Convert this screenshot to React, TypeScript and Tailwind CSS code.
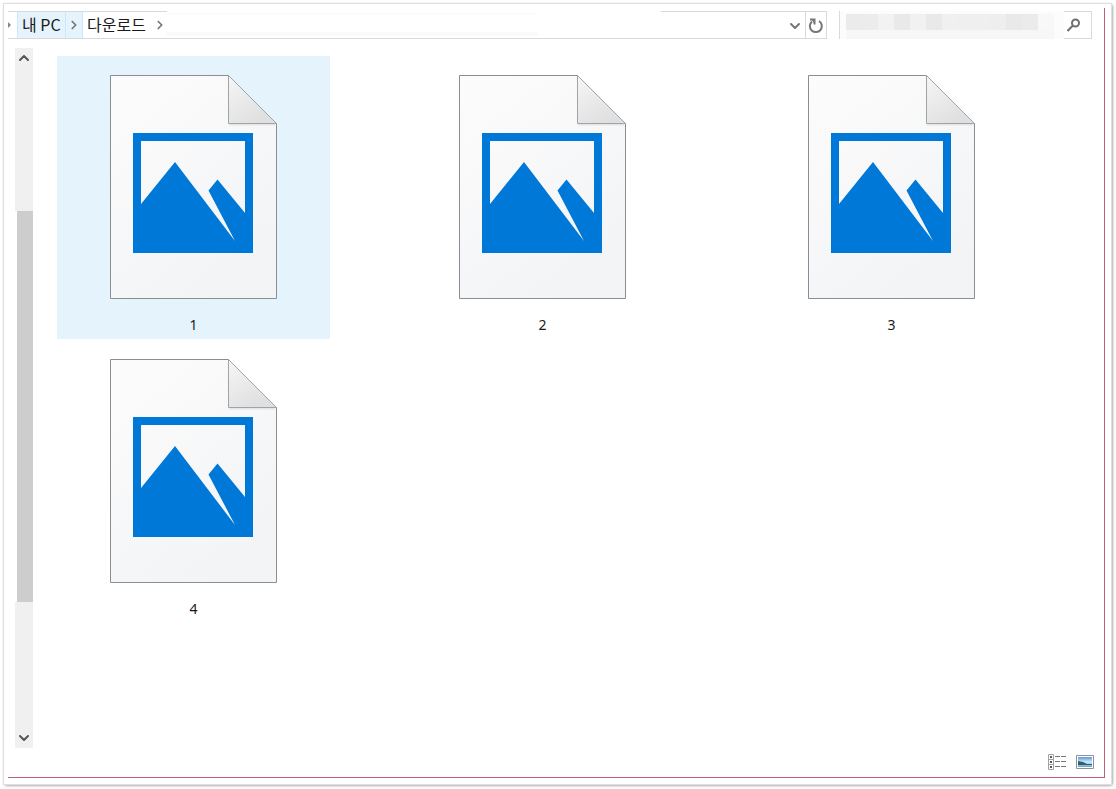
import React, { useState } from 'react';
import { ChevronDown, ChevronRight, ChevronUp } from 'lucide-react';

const files = [
  { id: 1, name: '1' },
  { id: 2, name: '2' },
  { id: 3, name: '3' },
  { id: 4, name: '4' },
];

// Pixelated search text, one entry per block
const mosaic = [
  'bg-[#ebebeb]',
  'bg-[#ececec]',
  'bg-[#f2f2f2]',
  'bg-[#e9e9e9]',
  'bg-[#f1f1f1]',
  'bg-[#e9e9e9]',
  'bg-[#f0f0f0]',
  'bg-[#efefef]',
  'bg-[#efefef]',
  'bg-[#eeeeee]',
  'bg-[#e9e9e9]',
  'bg-[#ebebeb]',
];

function ImageFileIcon() {
  return (
    <svg width="167" height="224" viewBox="0 0 167 224" aria-hidden="true">
      <defs>
        <linearGradient id="paper" x1="0" y1="0" x2="0.6" y2="1">
          <stop offset="0" stopColor="#fcfcfc" />
          <stop offset="1" stopColor="#f3f4f6" />
        </linearGradient>
        <linearGradient id="fold" x1="0" y1="0" x2="0.6" y2="1">
          <stop offset="0" stopColor="#f6f6f6" />
          <stop offset="1" stopColor="#dfdfdf" />
        </linearGradient>
      </defs>
      <path d="M0.5 0.5H118.5L166.5 48.5V223.5H0.5Z" fill="url(#paper)" stroke="#8a8d92" />
      <path d="M119 49.5H165" stroke="#e4e5e7" strokeWidth="2" />
      <path d="M118.5 0.5V48.5H166.5Z" fill="url(#fold)" stroke="#a0a3a8" />
      <path fill="#0078d7" fillRule="evenodd" d="M23 58H143V178H23Z M31 66V129L65 87L125 166L98.500 115.500L107.500 104.500L135 138V66Z" />
    </svg>
  );
}

function RefreshIcon() {
  return (
    <svg width="16" height="18" viewBox="0 0 16 18" fill="none" stroke="#777" strokeWidth="2" aria-hidden="true">
      <path d="M11 5A6 6 0 1 1 4 5.500" />
      <path d="M2 3.500H6.500V8.500" />
      <path d="M3 3H7V8Z" fill="#777" stroke="none" />
    </svg>
  );
}

function SearchIcon() {
  return (
    <svg width="14" height="14" viewBox="0 0 14 14" fill="none" stroke="#707070" strokeWidth="2" aria-hidden="true">
      <circle cx="8.500" cy="5" r="3.500" />
      <path d="M6 7.500L0.500 13" />
    </svg>
  );
}

function DetailsIcon() {
  return (
    <svg width="18" height="16" viewBox="0 0 18 16" fill="none" aria-hidden="true">
      <path d="M0.500 0.500H5.500V15.500H0.500ZM0.500 5.500H5.500M0.500 10.500H5.500" stroke="#a5a0a0" />
      <path d="M2 3H4M2 8H4M2 13H4" stroke="#555" strokeWidth="2" />
      <path d="M7 2.500H12M13 2.500H18M7 7.500H12M13 7.500H18M7 12.500H12M13 12.500H18" stroke="#777" />
    </svg>
  );
}

function ThumbnailsIcon() {
  return (
    <svg width="18" height="14" viewBox="0 0 18 14" aria-hidden="true">
      <defs>
        <linearGradient id="sky" x1="0" y1="0" x2="0" y2="1">
          <stop offset="0" stopColor="#5a9ad8" />
          <stop offset="0.5" stopColor="#cfe7f8" />
          <stop offset="1" stopColor="#6aa5cf" />
        </linearGradient>
      </defs>
      <path d="M0.500 0.500H17.500V13.500H0.500Z" fill="#fff" stroke="#8a929c" />
      <path d="M2 2H16V12H2Z" fill="url(#sky)" />
      <path d="M2 6L7 7L11 9L16 9V10H2Z" fill="#31606a" />
    </svg>
  );
}

export default function App() {
  const [selected, setSelected] = useState(1);
  const [query, setQuery] = useState('');

  return (
    <div className="flex min-h-screen bg-white pt-1 pr-[5px] pb-[5px] pl-1 font-['Noto_Sans_CJK_KR','Noto_Sans',sans-serif] text-[#1a1a1a]">
      <div className="flex flex-1 bg-white pt-1 pr-1.5 pb-1.5 pl-1 shadow-[0_0_0_1px_#dedede,1px_1px_3px_0_#666]">
        <div className="flex flex-1 flex-col border-r border-b border-[#bf5f7b]">
          <header className="flex h-[31px] gap-3 pt-[3px] pr-3">
            <nav aria-label="Address" className="flex flex-1 border-r border-b border-[#d9d9d9]">
              <div className="flex items-center border-t border-[#d9d9d9] text-base leading-none">
                <span className="flex w-[9px] justify-start overflow-hidden">
                  <svg width="3" height="6" viewBox="0 0 3 6" aria-hidden="true">
                    <path d="M0 0L3 3L0 6Z" fill="#888" />
                  </svg>
                </span>
                <span className="flex h-full w-[66px] items-center border-x border-[#cce8ff] bg-[#e5f3fd]">
                  <a href="#pc" className="w-[47px] pb-0.5 pl-1 whitespace-nowrap">내 PC</a>
                  <span className="flex h-full flex-1 items-center justify-center border-l border-[#cce8ff]">
                    <ChevronRight className="h-3.5 w-3.5 text-[#777]" strokeWidth={3} />
                  </span>
                </span>
                <a href="#downloads" className="w-[70px] pb-0.5 pl-1 whitespace-nowrap">다운로드</a>
                <ChevronRight className="h-3.5 w-3.5 text-[#777]" strokeWidth={3} />
              </div>
              <div className="flex flex-1 flex-col justify-between py-0.5">
                <div className="h-0.5 w-3/4 bg-[#fcfcfc]" />
                <div className="h-1 w-3/4 bg-[#fafafa]" />
              </div>
              <div className="flex w-[165px] justify-end border-t border-[#d9d9d9]">
                <button type="button" aria-label="Previous locations" className="flex w-5 items-center justify-center pt-0.5">
                  <ChevronDown className="h-4 w-4 text-[#777]" strokeWidth={3} />
                </button>
                <button type="button" aria-label="Refresh" className="flex w-[21px] items-center justify-center border-l border-[#d9d9d9]">
                  <RefreshIcon />
                </button>
              </div>
            </nav>

            <div className="flex w-[253px] border-l border-[#d9d9d9]">
              <div className="relative flex flex-1 flex-col bg-[#fcfcfc] pt-[3px] pl-1.5">
                <div className="flex h-4">
                  {mosaic.map((color, i) => (
                    <div key={i} className={`w-4 ${color}`} />
                  ))}
                  <div className="w-4 bg-[#f8f8f8]" />
                </div>
                <div className="w-52 flex-1 bg-[#f7f7f7]" />
                <input
                  type="text"
                  aria-label="Search"
                  value={query}
                  onChange={(e) => setQuery(e.target.value)}
                  className="absolute inset-0 bg-transparent px-2 text-sm outline-none"
                />
              </div>
              <button type="button" aria-label="Start search" className="flex w-7 items-center border-y border-r border-[#d9d9d9] pl-[3px]">
                <SearchIcon />
              </button>
            </div>
          </header>

          <main className="flex flex-1 pt-[9px]">
            <div className="flex w-[25px] flex-col pl-[7px]">
              <button type="button" aria-label="Scroll up" className="flex h-5 items-center justify-center bg-[#f0f0f0]">
                <ChevronUp className="h-4 w-4 text-[#555]" strokeWidth={3} />
              </button>
              <div className="flex-[143] bg-[#f0f0f0]" />
              <div className="ml-0.5 flex-[391] bg-[#cdcdcd]" />
              <div className="flex-[126] bg-[#f0f0f0]" />
              <button type="button" aria-label="Scroll down" className="flex h-5 items-center justify-center bg-[#f0f0f0]">
                <ChevronDown className="h-4 w-4 text-[#555]" strokeWidth={3} />
              </button>
            </div>

            <div className="grid flex-1 grid-cols-[repeat(auto-fill,273px)] content-start gap-x-[76px] gap-y-px pt-2 pl-6">
              {files.map((file) => (
                <button
                  key={file.id}
                  type="button"
                  onClick={() => setSelected(file.id)}
                  className={`flex h-[283px] flex-col items-center pt-[19px] ${selected === file.id ? 'bg-[#e5f3fd]' : ''}`}
                >
                  <ImageFileIcon />
                  <span className="mt-4 font-['Noto_Sans'] text-sm leading-5">{file.name}</span>
                </button>
              ))}
            </div>
          </main>

          <footer className="flex h-[29px] items-center justify-end gap-2.5 pr-2.5 pb-0.5">
            <button type="button" aria-label="Details view">
              <DetailsIcon />
            </button>
            <button type="button" aria-label="Thumbnail view">
              <ThumbnailsIcon />
            </button>
          </footer>
        </div>
      </div>
    </div>
  );
}
